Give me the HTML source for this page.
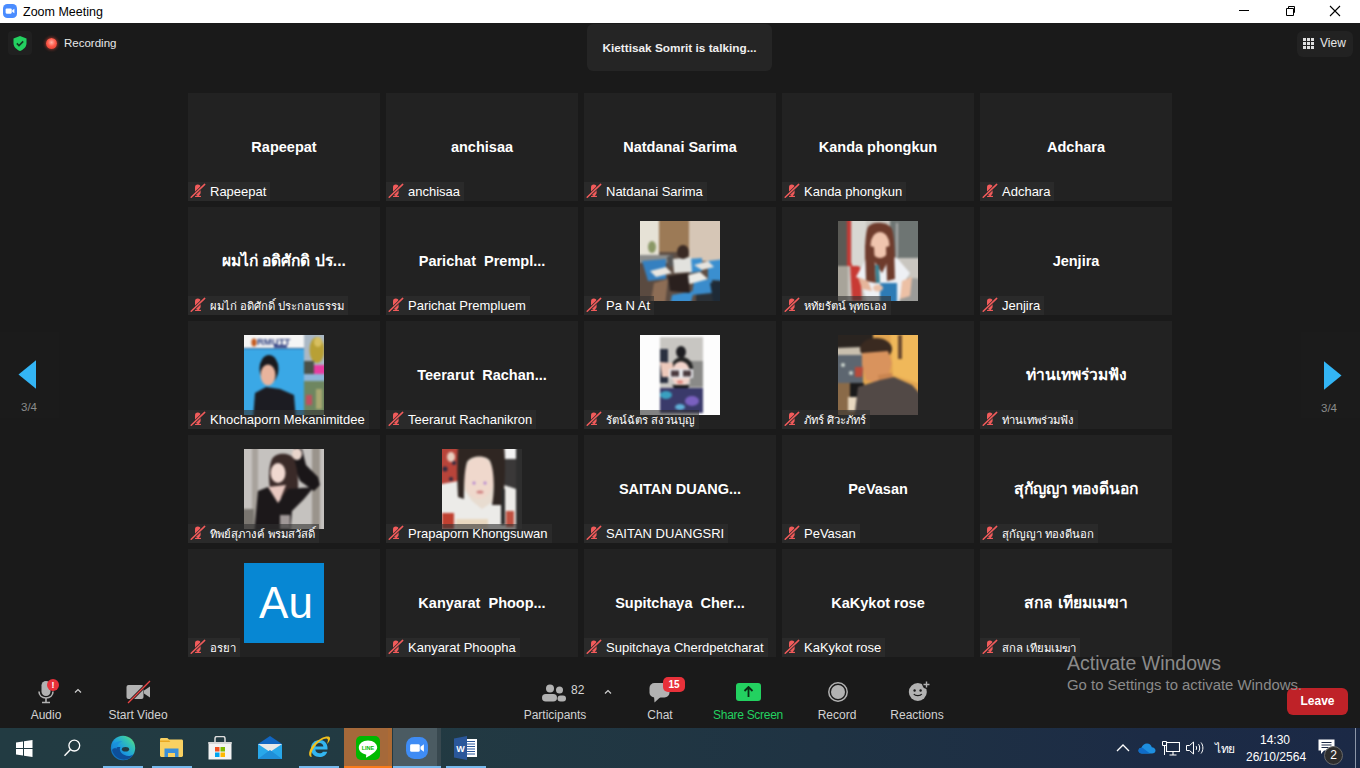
<!DOCTYPE html>
<html><head><meta charset="utf-8"><title>Zoom Meeting</title>
<style>
*{margin:0;padding:0;box-sizing:border-box}
html,body{width:1360px;height:768px;overflow:hidden}
body{background:#1a1a1a;font-family:"Liberation Sans",sans-serif;position:relative;color:#fff}
.abs{position:absolute}
#title{left:0;top:0;width:1360px;height:23px;background:#fff;color:#000}
#title .t{left:23px;top:5px;font-size:12.5px;white-space:nowrap}
.tile{position:absolute;width:192px;height:108px;background:#222;overflow:hidden}
.tile .ph{position:absolute;left:56px;top:14px;width:80px;height:80px;overflow:hidden}
.tile .big{position:absolute;left:0;top:45px;width:192px;text-align:center;font-weight:bold;font-size:14.5px;line-height:18px;white-space:nowrap;color:#fff}
.tile .lab{position:absolute;left:0;top:89px;height:19px;background:rgba(48,48,48,.6);padding:0 4px 0 22px;font-size:13px;line-height:20px;white-space:nowrap;color:#fff}
.tile .lab .mic{position:absolute;left:0;top:-1px}
.tile .lab .th{font-size:11.3px}
.tile .big .th{font-size:15.6px}
.tb{position:absolute;text-align:center;color:#d2d2d2;font-size:12px;white-space:nowrap}
</style></head>
<body>
<svg width="0" height="0" style="position:absolute"><filter id="bl" x="-10%" y="-10%" width="120%" height="120%"><feGaussianBlur stdDeviation="1.2"/></filter></svg>
<div id="title" class="abs">
  <svg class="abs" style="left:3px;top:4px" width="14" height="14" viewBox="0 0 16 16"><rect x="0" y="0" width="16" height="16" rx="5" fill="#4a8cff"/><rect x="3" y="5" width="7" height="6" rx="1.2" fill="#fff"/><path d="M10.5 7.2L13 5.5v5l-2.5-1.7z" fill="#fff"/></svg>
  <div class="abs t">Zoom Meeting</div>
  <div class="abs" style="left:1239px;top:10px;width:10px;height:1px;background:#000"></div>
  <svg class="abs" style="left:1284px;top:5px" width="12" height="12" viewBox="0 0 12 12"><path d="M2.5 3.5h7v7h-7z" fill="none" stroke="#000"/><path d="M4.5 3.5v-2h6v6h-1" fill="none" stroke="#000"/></svg>
  <svg class="abs" style="left:1329px;top:5px" width="12" height="12" viewBox="0 0 12 12"><path d="M1 1L11 11M11 1L1 11" stroke="#000" stroke-width="1.1"/></svg>
</div>

<!-- top bar -->
<div class="abs" style="left:8px;top:31px;width:24px;height:24px;background:#202020;border-radius:4px"></div>
<svg class="abs" style="left:13px;top:36px" width="14" height="15" viewBox="0 0 14 15"><path d="M7 0L13.5 2.5V7c0 4-3 6.5-6.5 8C3.5 13.5.5 11 .5 7V2.5z" fill="#23d160"/><path d="M3.8 7.4l2.2 2.2 4.2-4.2" fill="none" stroke="#143a22" stroke-width="1.6"/></svg>
<div class="abs" style="left:46px;top:38px;width:11px;height:11px;border-radius:50%;background:radial-gradient(circle at 50% 40%,#ffb3a6 0%,#ff5a4a 45%,#d8382a 100%);box-shadow:0 0 3px 1px rgba(255,80,60,.45)"></div>
<div class="abs" style="left:64px;top:37px;font-size:11.5px;color:#e8e8e8;white-space:nowrap">Recording</div>

<div class="abs" style="left:587px;top:24px;width:185px;height:47px;background:#252525;border-radius:6px"></div>
<div class="abs" style="left:587px;top:40.5px;width:185px;text-align:center;font-size:11.8px;font-weight:bold;color:#f0f0f0;white-space:nowrap">Kiettisak Somrit is talking...</div>

<div class="abs" style="left:1297px;top:31px;width:56px;height:26px;background:#222;border-radius:6px"></div>
<svg class="abs" style="left:1303px;top:38px" width="11" height="11" viewBox="0 0 11 11" fill="#e0e0e0"><rect x="0" y="0" width="3" height="3"/><rect x="4" y="0" width="3" height="3"/><rect x="8" y="0" width="3" height="3"/><rect x="0" y="4" width="3" height="3"/><rect x="4" y="4" width="3" height="3"/><rect x="8" y="4" width="3" height="3"/><rect x="0" y="8" width="3" height="3"/><rect x="4" y="8" width="3" height="3"/><rect x="8" y="8" width="3" height="3"/></svg>
<div class="abs" style="left:1320px;top:36px;font-size:12px;color:#e8e8e8;white-space:nowrap">View</div>

<!-- arrows -->
<div class="abs" style="left:0;top:332px;width:59px;height:86px;background:#1b1b1b"></div>
<div class="abs" style="left:1301px;top:332px;width:59px;height:86px;background:#1b1b1b"></div>
<svg class="abs" style="left:18px;top:360px" width="19" height="29" viewBox="0 0 19 29"><path d="M0.5 14.5L18 0.3V28.7z" fill="#33b5f5"/></svg>
<div class="abs" style="left:21px;top:401px;font-size:11.5px;color:#8c8c8c;white-space:nowrap">3/4</div>
<svg class="abs" style="left:1323px;top:361px" width="19" height="29" viewBox="0 0 19 29"><path d="M18.5 14.5L1 0.3V28.7z" fill="#33b5f5"/></svg>
<div class="abs" style="left:1321px;top:401.5px;font-size:11.5px;color:#8c8c8c;white-space:nowrap">3/4</div>

<div class="tile" style="left:188px;top:93px"><div class="big"><span>Rapeepat</span></div><div class="lab"><svg class="mic" width="20" height="20" viewBox="0 0 20 20"><rect x="7" y="3.6" width="5.6" height="10.8" rx="2.8" fill="#f25b5b"/><rect x="9.3" y="13.5" width="1.6" height="1.8" fill="#f25b5b"/><rect x="7" y="14.8" width="6" height="1.3" rx=".6" fill="#f25b5b"/><path d="M3.2 16.3L16.7 3.4" stroke="#2b2b2b" stroke-width="3"/><path d="M3.2 16.3L16.7 3.4" stroke="#f25b5b" stroke-width="1.5" stroke-linecap="round"/></svg><span>Rapeepat</span></div></div>
<div class="tile" style="left:386px;top:93px"><div class="big"><span>anchisaa</span></div><div class="lab"><svg class="mic" width="20" height="20" viewBox="0 0 20 20"><rect x="7" y="3.6" width="5.6" height="10.8" rx="2.8" fill="#f25b5b"/><rect x="9.3" y="13.5" width="1.6" height="1.8" fill="#f25b5b"/><rect x="7" y="14.8" width="6" height="1.3" rx=".6" fill="#f25b5b"/><path d="M3.2 16.3L16.7 3.4" stroke="#2b2b2b" stroke-width="3"/><path d="M3.2 16.3L16.7 3.4" stroke="#f25b5b" stroke-width="1.5" stroke-linecap="round"/></svg><span>anchisaa</span></div></div>
<div class="tile" style="left:584px;top:93px"><div class="big"><span>Natdanai Sarima</span></div><div class="lab"><svg class="mic" width="20" height="20" viewBox="0 0 20 20"><rect x="7" y="3.6" width="5.6" height="10.8" rx="2.8" fill="#f25b5b"/><rect x="9.3" y="13.5" width="1.6" height="1.8" fill="#f25b5b"/><rect x="7" y="14.8" width="6" height="1.3" rx=".6" fill="#f25b5b"/><path d="M3.2 16.3L16.7 3.4" stroke="#2b2b2b" stroke-width="3"/><path d="M3.2 16.3L16.7 3.4" stroke="#f25b5b" stroke-width="1.5" stroke-linecap="round"/></svg><span>Natdanai Sarima</span></div></div>
<div class="tile" style="left:782px;top:93px"><div class="big"><span>Kanda phongkun</span></div><div class="lab"><svg class="mic" width="20" height="20" viewBox="0 0 20 20"><rect x="7" y="3.6" width="5.6" height="10.8" rx="2.8" fill="#f25b5b"/><rect x="9.3" y="13.5" width="1.6" height="1.8" fill="#f25b5b"/><rect x="7" y="14.8" width="6" height="1.3" rx=".6" fill="#f25b5b"/><path d="M3.2 16.3L16.7 3.4" stroke="#2b2b2b" stroke-width="3"/><path d="M3.2 16.3L16.7 3.4" stroke="#f25b5b" stroke-width="1.5" stroke-linecap="round"/></svg><span>Kanda phongkun</span></div></div>
<div class="tile" style="left:980px;top:93px"><div class="big"><span>Adchara</span></div><div class="lab"><svg class="mic" width="20" height="20" viewBox="0 0 20 20"><rect x="7" y="3.6" width="5.6" height="10.8" rx="2.8" fill="#f25b5b"/><rect x="9.3" y="13.5" width="1.6" height="1.8" fill="#f25b5b"/><rect x="7" y="14.8" width="6" height="1.3" rx=".6" fill="#f25b5b"/><path d="M3.2 16.3L16.7 3.4" stroke="#2b2b2b" stroke-width="3"/><path d="M3.2 16.3L16.7 3.4" stroke="#f25b5b" stroke-width="1.5" stroke-linecap="round"/></svg><span>Adchara</span></div></div>
<div class="tile" style="left:188px;top:207px"><div class="big"><span class="th">ผมไก่ อดิศักดิ ปร...</span></div><div class="lab"><svg class="mic" width="20" height="20" viewBox="0 0 20 20"><rect x="7" y="3.6" width="5.6" height="10.8" rx="2.8" fill="#f25b5b"/><rect x="9.3" y="13.5" width="1.6" height="1.8" fill="#f25b5b"/><rect x="7" y="14.8" width="6" height="1.3" rx=".6" fill="#f25b5b"/><path d="M3.2 16.3L16.7 3.4" stroke="#2b2b2b" stroke-width="3"/><path d="M3.2 16.3L16.7 3.4" stroke="#f25b5b" stroke-width="1.5" stroke-linecap="round"/></svg><span class="th">ผมไก่ อดิศักดิ์ ประกอบธรรม</span></div></div>
<div class="tile" style="left:386px;top:207px"><div class="big"><span>Parichat&nbsp; Prempl...</span></div><div class="lab"><svg class="mic" width="20" height="20" viewBox="0 0 20 20"><rect x="7" y="3.6" width="5.6" height="10.8" rx="2.8" fill="#f25b5b"/><rect x="9.3" y="13.5" width="1.6" height="1.8" fill="#f25b5b"/><rect x="7" y="14.8" width="6" height="1.3" rx=".6" fill="#f25b5b"/><path d="M3.2 16.3L16.7 3.4" stroke="#2b2b2b" stroke-width="3"/><path d="M3.2 16.3L16.7 3.4" stroke="#f25b5b" stroke-width="1.5" stroke-linecap="round"/></svg><span>Parichat Prempluem</span></div></div>
<div class="tile" style="left:584px;top:207px"><div class="ph"><svg style="position:absolute;left:-4px;top:-4px;filter:blur(0.9px)" width="88" height="88" viewBox="-4 -4 88 88"><rect x="-5" y="-5" width="90" height="90" fill="#5e4e44"/>
<rect x="-5" y="-5" width="24" height="40" fill="#e6e2d6"/><ellipse cx="12" cy="26" rx="4" ry="6" fill="#8a9866"/>
<rect x="19" y="-5" width="31" height="36" fill="#9c7a56"/>
<rect x="49" y="-5" width="36" height="45" fill="#d6c6b6"/>
<rect x="-5" y="34" width="37" height="8" fill="#8b8d8c"/>
<path d="M-5 42H32L28 80H-5z" fill="#5a4a40"/>
<path d="M2 40L26 38 26 58 8 60z" fill="#3580c0"/>
<path d="M48 38L62 37 62 50 50 52z" fill="#3a8fd0"/>
<path d="M68 40L85 38 85 60 68 60z" fill="#3a8fd0"/>
<path d="M32 74L54 70 50 85 30 85z" fill="#3a8fd0"/>
<path d="M56 58L85 60 85 85 56 85z" fill="#2a3036"/><path d="M54 60L72 58 72 72 52 74z" fill="#3a8ccc"/><path d="M70 62L85 60 85 85 74 85z" fill="#1e2a36"/>
<path d="M10 50L26 46 32 52 16 56z" fill="#e9e6e0"/>
<path d="M41 56L60 51 68 58 50 63z" fill="#ecebe6"/>
<path d="M54 44L68 40 74 46 62 49z" fill="#e6e3de"/>
<path d="M14 62L28 58 25 85 10 85z" fill="#8d6d55"/>
<path d="M27 36L33 33 34 45 28 46z" fill="#555"/>
<path d="M33 38L51 36 52 51 34 52z" fill="#e2e2de"/>
<ellipse cx="43" cy="31" rx="6" ry="7" fill="#3a2a24"/>
<path d="M28 55L48 52 50 72 30 70z" fill="#2a201e"/></svg></div><div class="lab"><svg class="mic" width="20" height="20" viewBox="0 0 20 20"><rect x="7" y="3.6" width="5.6" height="10.8" rx="2.8" fill="#f25b5b"/><rect x="9.3" y="13.5" width="1.6" height="1.8" fill="#f25b5b"/><rect x="7" y="14.8" width="6" height="1.3" rx=".6" fill="#f25b5b"/><path d="M3.2 16.3L16.7 3.4" stroke="#2b2b2b" stroke-width="3"/><path d="M3.2 16.3L16.7 3.4" stroke="#f25b5b" stroke-width="1.5" stroke-linecap="round"/></svg><span>Pa N At</span></div></div>
<div class="tile" style="left:782px;top:207px"><div class="ph"><svg style="position:absolute;left:-4px;top:-4px;filter:blur(0.9px)" width="88" height="88" viewBox="-4 -4 88 88"><rect x="-5" y="-5" width="90" height="90" fill="#c9c6c0"/>
<rect x="-5" y="-5" width="15" height="90" fill="#5a5a55"/><rect x="-5" y="45" width="15" height="40" fill="#a8a49a"/>
<rect x="9" y="-5" width="4" height="50" fill="#c43a35"/><path d="M12 42L22 46 24 80 14 80z" fill="#c83a34"/>
<rect x="14" y="-5" width="14" height="50" fill="#d8d7d2"/>
<rect x="52" y="-5" width="33" height="42" fill="#6e7573"/><rect x="58" y="2" width="2" height="34" fill="#aaa"/>
<path d="M56 56L85 58 85 85 56 85z" fill="#9b9b98"/>
<path d="M30 6C34 0 50 0 54 8 58 20 56 45 58 62L28 62C27 40 26 15 30 6z" fill="#6e3b2c"/>
<ellipse cx="42" cy="24" rx="9.5" ry="13" fill="#f0c4ae"/>
<path d="M18 56L28 38 36 40 44 52 50 40 58 36 72 52 66 62 60 85 30 85 22 58z" fill="#eef0f4"/>
<path d="M27 24L36 26 38 62 28 60z" fill="#6e3b2c"/><path d="M48 26L56 24 57 58 49 60z" fill="#6e3b2c"/>
<path d="M20 56L30 60 34 70 24 68z" fill="#e5b59b"/>
<path d="M64 60L74 56 72 75 62 78z" fill="#ecc0a5"/>
<path d="M37 44L41 44 42 62 38 62z" fill="#3a8090"/>
<rect x="42" y="62" width="17" height="20" fill="#2d7bb5"/>
<ellipse cx="40" cy="67" rx="5" ry="3.5" fill="#eac0a8"/></svg></div><div class="lab"><svg class="mic" width="20" height="20" viewBox="0 0 20 20"><rect x="7" y="3.6" width="5.6" height="10.8" rx="2.8" fill="#f25b5b"/><rect x="9.3" y="13.5" width="1.6" height="1.8" fill="#f25b5b"/><rect x="7" y="14.8" width="6" height="1.3" rx=".6" fill="#f25b5b"/><path d="M3.2 16.3L16.7 3.4" stroke="#2b2b2b" stroke-width="3"/><path d="M3.2 16.3L16.7 3.4" stroke="#f25b5b" stroke-width="1.5" stroke-linecap="round"/></svg><span class="th">หทัยรัตน์ พุทธเอง</span></div></div>
<div class="tile" style="left:980px;top:207px"><div class="big"><span>Jenjira</span></div><div class="lab"><svg class="mic" width="20" height="20" viewBox="0 0 20 20"><rect x="7" y="3.6" width="5.6" height="10.8" rx="2.8" fill="#f25b5b"/><rect x="9.3" y="13.5" width="1.6" height="1.8" fill="#f25b5b"/><rect x="7" y="14.8" width="6" height="1.3" rx=".6" fill="#f25b5b"/><path d="M3.2 16.3L16.7 3.4" stroke="#2b2b2b" stroke-width="3"/><path d="M3.2 16.3L16.7 3.4" stroke="#f25b5b" stroke-width="1.5" stroke-linecap="round"/></svg><span>Jenjira</span></div></div>
<div class="tile" style="left:188px;top:321px"><div class="ph"><svg style="position:absolute;left:-4px;top:-4px;filter:blur(0.9px)" width="88" height="88" viewBox="-4 -4 88 88"><rect x="-5" y="-5" width="90" height="90" fill="#3aa8e6"/>
<rect x="-5" y="-5" width="65" height="18" fill="#f5f5f5"/><rect x="-5" y="13" width="65" height="1" fill="#2a5a90"/>
<ellipse cx="10" cy="7.5" rx="2.6" ry="4" fill="#c35a20"/><text x="13" y="10" font-family="Liberation Sans" font-size="9.5" font-weight="bold" fill="#2c3e7e">RMUTT</text><rect x="30" y="10" width="13" height="2.5" fill="#2a3a80"/>
<rect x="60" y="-5" width="25" height="44" fill="#aab8c5"/>
<ellipse cx="73" cy="15" rx="7.5" ry="13" fill="#b8a035"/><ellipse cx="74" cy="7" rx="4" ry="5" fill="#d8c060"/><rect x="60" y="26" width="10" height="13" fill="#4a5048"/><rect x="70" y="30" width="15" height="9" fill="#e83ca0"/>
<rect x="60" y="39" width="25" height="7" fill="#8fb5d8"/><rect x="60" y="46" width="25" height="40" fill="#6e8660"/>
<rect x="62" y="60" width="6" height="10" fill="#c05060"/><rect x="72" y="54" width="6" height="20" fill="#a8a870"/>
<ellipse cx="25" cy="34" rx="9.5" ry="14" fill="#1a1a1e"/>
<ellipse cx="24" cy="40" rx="7.5" ry="10.5" fill="#e8b49d"/>
<path d="M9 85L11 58 22 52 36 54 50 60 52 85z" fill="#1c1c22"/></svg></div><div class="lab"><svg class="mic" width="20" height="20" viewBox="0 0 20 20"><rect x="7" y="3.6" width="5.6" height="10.8" rx="2.8" fill="#f25b5b"/><rect x="9.3" y="13.5" width="1.6" height="1.8" fill="#f25b5b"/><rect x="7" y="14.8" width="6" height="1.3" rx=".6" fill="#f25b5b"/><path d="M3.2 16.3L16.7 3.4" stroke="#2b2b2b" stroke-width="3"/><path d="M3.2 16.3L16.7 3.4" stroke="#f25b5b" stroke-width="1.5" stroke-linecap="round"/></svg><span>Khochaporn Mekanimitdee</span></div></div>
<div class="tile" style="left:386px;top:321px"><div class="big"><span>Teerarut&nbsp; Rachan...</span></div><div class="lab"><svg class="mic" width="20" height="20" viewBox="0 0 20 20"><rect x="7" y="3.6" width="5.6" height="10.8" rx="2.8" fill="#f25b5b"/><rect x="9.3" y="13.5" width="1.6" height="1.8" fill="#f25b5b"/><rect x="7" y="14.8" width="6" height="1.3" rx=".6" fill="#f25b5b"/><path d="M3.2 16.3L16.7 3.4" stroke="#2b2b2b" stroke-width="3"/><path d="M3.2 16.3L16.7 3.4" stroke="#f25b5b" stroke-width="1.5" stroke-linecap="round"/></svg><span>Teerarut Rachanikron</span></div></div>
<div class="tile" style="left:584px;top:321px"><div class="ph"><svg style="position:absolute;left:-4px;top:-4px;filter:blur(0.9px)" width="88" height="88" viewBox="-4 -4 88 88"><rect x="-5" y="-5" width="90" height="90" fill="#fdfdfd"/>
<rect x="20" y="2" width="43" height="76" fill="#c8c6c2"/>
<rect x="50" y="26" width="13" height="26" fill="#8a8a88"/>
<rect x="20" y="14" width="8" height="34" fill="#2a3040"/>
<ellipse cx="41" cy="17" rx="5" ry="6" fill="#1e1e22"/>
<ellipse cx="42" cy="34" rx="11" ry="12" fill="#222"/>
<ellipse cx="41" cy="39" rx="9.5" ry="12.5" fill="#f2d4cb"/>
<path d="M20 27L33 28 33 42 22 42z" fill="#edc9bb"/>
<rect x="29" y="34" width="24" height="9" fill="#e8e8ec"/>
<rect x="31" y="35.5" width="8" height="6" fill="#4a3a3e"/><rect x="43" y="35.5" width="8" height="6" fill="#4a3a3e"/>
<ellipse cx="40" cy="47" rx="3" ry="1.5" fill="#d87a70"/>
<path d="M32 50L50 50 46 56 36 56z" fill="#1a1a1a"/>
<rect x="20" y="53" width="43" height="25" fill="#3a3a6a"/>
<ellipse cx="26" cy="60" rx="6" ry="4" fill="#3aa0c0"/><ellipse cx="52" cy="66" rx="7" ry="5" fill="#7a60c0"/><ellipse cx="40" cy="72" rx="5" ry="3" fill="#60b0d8"/></svg></div><div class="lab"><svg class="mic" width="20" height="20" viewBox="0 0 20 20"><rect x="7" y="3.6" width="5.6" height="10.8" rx="2.8" fill="#f25b5b"/><rect x="9.3" y="13.5" width="1.6" height="1.8" fill="#f25b5b"/><rect x="7" y="14.8" width="6" height="1.3" rx=".6" fill="#f25b5b"/><path d="M3.2 16.3L16.7 3.4" stroke="#2b2b2b" stroke-width="3"/><path d="M3.2 16.3L16.7 3.4" stroke="#f25b5b" stroke-width="1.5" stroke-linecap="round"/></svg><span class="th">รัตน์ฉัตร สงวนบุญ</span></div></div>
<div class="tile" style="left:782px;top:321px"><div class="ph"><svg style="position:absolute;left:-4px;top:-4px;filter:blur(0.9px)" width="88" height="88" viewBox="-4 -4 88 88"><rect x="-5" y="-5" width="90" height="90" fill="#e2a550"/>
<rect x="-5" y="-5" width="40" height="18" fill="#2a2420"/>
<path d="M-5 13L24 12 24 20 -5 20z" fill="#c9bfae"/>
<rect x="-5" y="20" width="30" height="30" fill="#5d6670"/>
<circle cx="5" cy="30" r="2" fill="#cfd8d0"/><circle cx="13" cy="38" r="2" fill="#cfd8d0"/>
<rect x="-5" y="48" width="25" height="37" fill="#8a6a48"/>
<path d="M52 -5L85 -5 85 50 55 40z" fill="#f0b85a"/>
<path d="M60 0L64 0 64 24 60 24z" fill="#6a4a30"/>
<path d="M17 32L25 32 24 42 17 42z" fill="#b84a3a"/>
<path d="M12 48L26 48 26 62 12 62z" fill="#1a1a1a"/>
<path d="M10 62L20 62 20 76 10 76z" fill="#e8d8c0"/>
<ellipse cx="38" cy="14" rx="16" ry="11" fill="#3a2a20"/>
<path d="M24 18L50 16 54 28 50 42 40 48 28 45 24 30z" fill="#d9935d"/>
<path d="M40 40L54 38 56 55 42 56z" fill="#c98550"/>
<path d="M16 85L20 52 42 45 56 42 74 50 85 62 85 85z" fill="#524946"/></svg></div><div class="lab"><svg class="mic" width="20" height="20" viewBox="0 0 20 20"><rect x="7" y="3.6" width="5.6" height="10.8" rx="2.8" fill="#f25b5b"/><rect x="9.3" y="13.5" width="1.6" height="1.8" fill="#f25b5b"/><rect x="7" y="14.8" width="6" height="1.3" rx=".6" fill="#f25b5b"/><path d="M3.2 16.3L16.7 3.4" stroke="#2b2b2b" stroke-width="3"/><path d="M3.2 16.3L16.7 3.4" stroke="#f25b5b" stroke-width="1.5" stroke-linecap="round"/></svg><span class="th">ภัทร์ ศิวะภัทร์</span></div></div>
<div class="tile" style="left:980px;top:321px"><div class="big"><span class="th">ท่านเทพร่วมฟัง</span></div><div class="lab"><svg class="mic" width="20" height="20" viewBox="0 0 20 20"><rect x="7" y="3.6" width="5.6" height="10.8" rx="2.8" fill="#f25b5b"/><rect x="9.3" y="13.5" width="1.6" height="1.8" fill="#f25b5b"/><rect x="7" y="14.8" width="6" height="1.3" rx=".6" fill="#f25b5b"/><path d="M3.2 16.3L16.7 3.4" stroke="#2b2b2b" stroke-width="3"/><path d="M3.2 16.3L16.7 3.4" stroke="#f25b5b" stroke-width="1.5" stroke-linecap="round"/></svg><span class="th">ท่านเทพร่วมฟัง</span></div></div>
<div class="tile" style="left:188px;top:435px"><div class="ph"><svg style="position:absolute;left:-4px;top:-4px;filter:blur(0.9px)" width="88" height="88" viewBox="-4 -4 88 88"><rect x="-5" y="-5" width="90" height="90" fill="#c5c2bf"/>
<rect x="8" y="-5" width="6" height="90" fill="#a8a29c"/><rect x="68" y="-5" width="8" height="90" fill="#9a948c"/>
<path d="M-5 60L10 60 10 85 -5 85z" fill="#7a7670"/>
<path d="M50 -5L58 0 62 16 74 28 76 36 70 42 56 32 50 18z" fill="#1a1618"/>
<ellipse cx="53" cy="5" rx="5" ry="6" fill="#e9d5cc"/>
<path d="M28 10C32 3 46 3 50 10 54 20 56 40 52 52L28 48C24 36 24 18 28 10z" fill="#3a2a28"/>
<ellipse cx="34" cy="24" rx="7.5" ry="10" fill="#f0d8d0"/>
<path d="M24 38L42 36 34 56z" fill="#e8c8c0"/>
<path d="M10 85L14 42 24 38 34 54 44 40 70 38 60 50 48 62 46 85z" fill="#1c181a"/>
<rect x="36" y="66" width="10" height="14" fill="#a09898"/></svg></div><div class="lab"><svg class="mic" width="20" height="20" viewBox="0 0 20 20"><rect x="7" y="3.6" width="5.6" height="10.8" rx="2.8" fill="#f25b5b"/><rect x="9.3" y="13.5" width="1.6" height="1.8" fill="#f25b5b"/><rect x="7" y="14.8" width="6" height="1.3" rx=".6" fill="#f25b5b"/><path d="M3.2 16.3L16.7 3.4" stroke="#2b2b2b" stroke-width="3"/><path d="M3.2 16.3L16.7 3.4" stroke="#f25b5b" stroke-width="1.5" stroke-linecap="round"/></svg><span class="th">ทิพย์สุภางค์ พรมสวัสดิ์</span></div></div>
<div class="tile" style="left:386px;top:435px"><div class="ph"><svg style="position:absolute;left:-4px;top:-4px;filter:blur(0.9px)" width="88" height="88" viewBox="-4 -4 88 88"><rect x="-5" y="-5" width="90" height="90" fill="#e8dcd0"/>
<rect x="-5" y="-5" width="23" height="43" fill="#b8443a"/>
<circle cx="3" cy="20" r="2.5" fill="#2a2a40"/><circle cx="9" cy="30" r="2" fill="#2a2a40"/><circle cx="12" cy="14" r="2" fill="#2a2a40"/>
<ellipse cx="9" cy="8" rx="4" ry="5" fill="#e8cfc0"/>
<rect x="56" y="-5" width="20" height="15" fill="#f2f2f2"/>
<rect x="60" y="10" width="25" height="38" fill="#3a3838"/><rect x="74" y="-5" width="11" height="90" fill="#2e2e2e"/>
<path d="M-5 36L16 32 30 52 40 60 52 52 62 36 74 40 74 85 -5 85z" fill="#ecebe8"/>
<ellipse cx="37" cy="29" rx="15" ry="21" fill="#efd8cc"/>
<path d="M16 -5H62C64 15 63 40 60 56L50 56C53 40 52 20 48 12 44 6 30 6 25 13 22 22 22 40 22 50L16 48C15 30 15 12 16 -5z" fill="#2f2622"/>
<rect x="59" y="40" width="4" height="36" fill="#2a2a2a"/>
<rect x="0" y="64" width="12" height="16" fill="#c04030"/><rect x="64" y="62" width="8" height="16" fill="#c05040"/>
<rect x="14" y="70" width="32" height="10" fill="#e9d8c0"/>
<ellipse cx="38" cy="43" rx="3.5" ry="1.6" fill="#d08080"/>
<circle cx="32" cy="34" r="1.5" fill="#b080d0"/><circle cx="43" cy="34" r="1.5" fill="#b080d0"/></svg></div><div class="lab"><svg class="mic" width="20" height="20" viewBox="0 0 20 20"><rect x="7" y="3.6" width="5.6" height="10.8" rx="2.8" fill="#f25b5b"/><rect x="9.3" y="13.5" width="1.6" height="1.8" fill="#f25b5b"/><rect x="7" y="14.8" width="6" height="1.3" rx=".6" fill="#f25b5b"/><path d="M3.2 16.3L16.7 3.4" stroke="#2b2b2b" stroke-width="3"/><path d="M3.2 16.3L16.7 3.4" stroke="#f25b5b" stroke-width="1.5" stroke-linecap="round"/></svg><span>Prapaporn Khongsuwan</span></div></div>
<div class="tile" style="left:584px;top:435px"><div class="big"><span>SAITAN DUANG...</span></div><div class="lab"><svg class="mic" width="20" height="20" viewBox="0 0 20 20"><rect x="7" y="3.6" width="5.6" height="10.8" rx="2.8" fill="#f25b5b"/><rect x="9.3" y="13.5" width="1.6" height="1.8" fill="#f25b5b"/><rect x="7" y="14.8" width="6" height="1.3" rx=".6" fill="#f25b5b"/><path d="M3.2 16.3L16.7 3.4" stroke="#2b2b2b" stroke-width="3"/><path d="M3.2 16.3L16.7 3.4" stroke="#f25b5b" stroke-width="1.5" stroke-linecap="round"/></svg><span>SAITAN DUANGSRI</span></div></div>
<div class="tile" style="left:782px;top:435px"><div class="big"><span>PeVasan</span></div><div class="lab"><svg class="mic" width="20" height="20" viewBox="0 0 20 20"><rect x="7" y="3.6" width="5.6" height="10.8" rx="2.8" fill="#f25b5b"/><rect x="9.3" y="13.5" width="1.6" height="1.8" fill="#f25b5b"/><rect x="7" y="14.8" width="6" height="1.3" rx=".6" fill="#f25b5b"/><path d="M3.2 16.3L16.7 3.4" stroke="#2b2b2b" stroke-width="3"/><path d="M3.2 16.3L16.7 3.4" stroke="#f25b5b" stroke-width="1.5" stroke-linecap="round"/></svg><span>PeVasan</span></div></div>
<div class="tile" style="left:980px;top:435px"><div class="big"><span class="th">สุกัญญา ทองดีนอก</span></div><div class="lab"><svg class="mic" width="20" height="20" viewBox="0 0 20 20"><rect x="7" y="3.6" width="5.6" height="10.8" rx="2.8" fill="#f25b5b"/><rect x="9.3" y="13.5" width="1.6" height="1.8" fill="#f25b5b"/><rect x="7" y="14.8" width="6" height="1.3" rx=".6" fill="#f25b5b"/><path d="M3.2 16.3L16.7 3.4" stroke="#2b2b2b" stroke-width="3"/><path d="M3.2 16.3L16.7 3.4" stroke="#f25b5b" stroke-width="1.5" stroke-linecap="round"/></svg><span class="th">สุกัญญา ทองดีนอก</span></div></div>
<div class="tile" style="left:188px;top:549px"><div class="ph" style="background:#0787d3;color:#fff;font-size:44px;line-height:79px;text-align:center;padding-left:4px;font-family:'Liberation Sans',sans-serif">Au</div><div class="lab"><svg class="mic" width="20" height="20" viewBox="0 0 20 20"><rect x="7" y="3.6" width="5.6" height="10.8" rx="2.8" fill="#f25b5b"/><rect x="9.3" y="13.5" width="1.6" height="1.8" fill="#f25b5b"/><rect x="7" y="14.8" width="6" height="1.3" rx=".6" fill="#f25b5b"/><path d="M3.2 16.3L16.7 3.4" stroke="#2b2b2b" stroke-width="3"/><path d="M3.2 16.3L16.7 3.4" stroke="#f25b5b" stroke-width="1.5" stroke-linecap="round"/></svg><span class="th">อรยา</span></div></div>
<div class="tile" style="left:386px;top:549px"><div class="big"><span>Kanyarat&nbsp; Phoop...</span></div><div class="lab"><svg class="mic" width="20" height="20" viewBox="0 0 20 20"><rect x="7" y="3.6" width="5.6" height="10.8" rx="2.8" fill="#f25b5b"/><rect x="9.3" y="13.5" width="1.6" height="1.8" fill="#f25b5b"/><rect x="7" y="14.8" width="6" height="1.3" rx=".6" fill="#f25b5b"/><path d="M3.2 16.3L16.7 3.4" stroke="#2b2b2b" stroke-width="3"/><path d="M3.2 16.3L16.7 3.4" stroke="#f25b5b" stroke-width="1.5" stroke-linecap="round"/></svg><span>Kanyarat Phoopha</span></div></div>
<div class="tile" style="left:584px;top:549px"><div class="big"><span>Supitchaya&nbsp; Cher...</span></div><div class="lab"><svg class="mic" width="20" height="20" viewBox="0 0 20 20"><rect x="7" y="3.6" width="5.6" height="10.8" rx="2.8" fill="#f25b5b"/><rect x="9.3" y="13.5" width="1.6" height="1.8" fill="#f25b5b"/><rect x="7" y="14.8" width="6" height="1.3" rx=".6" fill="#f25b5b"/><path d="M3.2 16.3L16.7 3.4" stroke="#2b2b2b" stroke-width="3"/><path d="M3.2 16.3L16.7 3.4" stroke="#f25b5b" stroke-width="1.5" stroke-linecap="round"/></svg><span>Supitchaya Cherdpetcharat</span></div></div>
<div class="tile" style="left:782px;top:549px"><div class="big"><span>KaKykot rose</span></div><div class="lab"><svg class="mic" width="20" height="20" viewBox="0 0 20 20"><rect x="7" y="3.6" width="5.6" height="10.8" rx="2.8" fill="#f25b5b"/><rect x="9.3" y="13.5" width="1.6" height="1.8" fill="#f25b5b"/><rect x="7" y="14.8" width="6" height="1.3" rx=".6" fill="#f25b5b"/><path d="M3.2 16.3L16.7 3.4" stroke="#2b2b2b" stroke-width="3"/><path d="M3.2 16.3L16.7 3.4" stroke="#f25b5b" stroke-width="1.5" stroke-linecap="round"/></svg><span>KaKykot rose</span></div></div>
<div class="tile" style="left:980px;top:549px"><div class="big"><span class="th">สกล เทียมเมฆา</span></div><div class="lab"><svg class="mic" width="20" height="20" viewBox="0 0 20 20"><rect x="7" y="3.6" width="5.6" height="10.8" rx="2.8" fill="#f25b5b"/><rect x="9.3" y="13.5" width="1.6" height="1.8" fill="#f25b5b"/><rect x="7" y="14.8" width="6" height="1.3" rx=".6" fill="#f25b5b"/><path d="M3.2 16.3L16.7 3.4" stroke="#2b2b2b" stroke-width="3"/><path d="M3.2 16.3L16.7 3.4" stroke="#f25b5b" stroke-width="1.5" stroke-linecap="round"/></svg><span class="th">สกล เทียมเมฆา</span></div></div>

<!-- bottom toolbar -->
<svg class="abs" style="left:37px;top:680px" width="18" height="24" viewBox="0 0 18 24"><rect x="4.5" y="1" width="9" height="15" rx="4.5" fill="#b2b2b2"/><path d="M2 11.5c0 4 3 6.5 7 6.5s7-2.5 7-6.5" fill="none" stroke="#b2b2b2" stroke-width="1.6"/><path d="M9 18v4M5 22.5h8" stroke="#b2b2b2" stroke-width="1.6"/></svg>
<div class="abs" style="left:47px;top:679px;width:12px;height:12px;border-radius:50%;background:#e8313a;color:#fff;font-size:9px;font-weight:bold;line-height:12px;text-align:center">!</div>
<svg class="abs" style="left:74px;top:688px" width="8" height="5" viewBox="0 0 8 5"><path d="M1 4.5L4 1.5 7 4.5" fill="none" stroke="#d0d0d0" stroke-width="1.2"/></svg>
<div class="tb" style="left:16px;top:708px;width:60px">Audio</div>

<svg class="abs" style="left:126px;top:680px" width="26" height="24" viewBox="0 0 26 24"><rect x="0.5" y="5" width="17" height="14" rx="2" fill="#b2b2b2"/><path d="M18 10.5L24 6.5v11L18 13.5z" fill="#b2b2b2"/><path d="M2 23L24 1" stroke="#1a1a1a" stroke-width="3"/><path d="M2 23L24 1" stroke="#ee4444" stroke-width="1.3"/></svg>
<div class="tb" style="left:98px;top:708px;width:80px">Start Video</div>

<svg class="abs" style="left:542px;top:684px" width="26" height="18" viewBox="0 0 26 18"><circle cx="8" cy="4.5" r="4" fill="#b2b2b2"/><rect x="0" y="10" width="15" height="7.5" rx="3.75" fill="#b2b2b2"/><circle cx="17.5" cy="6" r="3.5" fill="#b2b2b2"/><rect x="15.5" y="11.5" width="8.5" height="6" rx="3" fill="#b2b2b2"/></svg>
<div class="abs" style="left:571px;top:683px;font-size:12px;color:#d6d6d6">82</div>
<svg class="abs" style="left:604px;top:689px" width="8" height="5" viewBox="0 0 8 5"><path d="M1 4.5L4 1.5 7 4.5" fill="none" stroke="#d0d0d0" stroke-width="1.2"/></svg>
<div class="tb" style="left:515px;top:708px;width:80px">Participants</div>

<svg class="abs" style="left:649px;top:683px" width="22" height="22" viewBox="0 0 22 22"><rect x="0.5" y="0" width="20" height="14.5" rx="5" fill="#b2b2b2"/><path d="M5 13l.5 6.5 6-5.5z" fill="#b2b2b2"/></svg>
<div class="abs" style="left:663px;top:677px;width:22px;height:15px;border-radius:5px;background:#e8313a;color:#fff;font-size:10px;font-weight:bold;line-height:15px;text-align:center">15</div>
<div class="tb" style="left:630px;top:708px;width:60px">Chat</div>

<div class="abs" style="left:736px;top:683px;width:25px;height:18px;border-radius:3px;background:#23d160"></div>
<svg class="abs" style="left:743px;top:686px" width="11" height="12" viewBox="0 0 11 12"><path d="M5.5 1v10M1.5 5l4-4 4 4" fill="none" stroke="#0b2a14" stroke-width="1.8"/></svg>
<div class="tb" style="left:703px;top:708px;width:90px;color:#23d160;letter-spacing:-.3px">Share Screen</div>

<svg class="abs" style="left:828px;top:682px" width="20" height="20" viewBox="0 0 20 20"><circle cx="10" cy="10" r="9.2" fill="none" stroke="#b2b2b2" stroke-width="1.5"/><circle cx="10" cy="10" r="7" fill="#b2b2b2"/></svg>
<div class="tb" style="left:807px;top:708px;width:60px">Record</div>

<svg class="abs" style="left:906px;top:680px" width="26" height="24" viewBox="0 0 26 24"><circle cx="11.8" cy="12" r="9" fill="#b2b2b2"/><circle cx="8.6" cy="10.5" r="1.2" fill="#1a1a1a"/><circle cx="14.6" cy="10.5" r="1.2" fill="#1a1a1a"/><path d="M7.8 14c1.5 2.2 6.5 2.2 8 0" fill="none" stroke="#1a1a1a" stroke-width="1.3"/><circle cx="20.5" cy="4.5" r="4.2" fill="#1a1a1a"/><path d="M20.5 1.5v6M17.5 4.5h6" stroke="#b2b2b2" stroke-width="1.4"/></svg>
<div class="tb" style="left:877px;top:708px;width:80px">Reactions</div>

<div class="abs" style="left:1287px;top:688px;width:61px;height:27px;border-radius:6px;background:#bf2228;color:#fff;font-weight:bold;font-size:12px;line-height:27px;text-align:center">Leave</div>

<div class="abs" style="left:1067px;top:652px;font-size:19.5px;color:#8a8a8a;white-space:nowrap">Activate Windows</div>
<div class="abs" style="left:1067px;top:676.5px;font-size:14.9px;color:#8a8a8a;white-space:nowrap">Go to Settings to activate Windows.</div>

<!-- taskbar -->
<div class="abs" style="left:0;top:728px;width:1360px;height:40px;background:linear-gradient(90deg,#223b42 0%,#223a42 30%,#1f3343 60%,#1c2b45 85%,#1b2946 100%)"></div>
<svg class="abs" style="left:16px;top:740px" width="17" height="17" viewBox="0 0 17 17" fill="#fff"><path d="M0 2.4L7 1.4V8H0z"/><path d="M8 1.2L16.5 0V8H8z"/><path d="M0 9H7v6.6L0 14.6z"/><path d="M8 9h8.5v8L8 15.8z"/></svg>
<svg class="abs" style="left:62px;top:738px" width="20" height="20" viewBox="0 0 20 20"><circle cx="12.3" cy="7.6" r="5.4" fill="none" stroke="#fff" stroke-width="1.3"/><path d="M8.5 11.5L2.5 17.8" stroke="#fff" stroke-width="1.4"/></svg>
<!-- edge -->
<svg class="abs" style="left:110px;top:735px" width="26" height="26" viewBox="0 0 26 26"><defs><linearGradient id="eg1" x1="0" y1="1" x2="1" y2="0"><stop offset="0" stop-color="#0b5cad"/><stop offset=".45" stop-color="#1c9be0"/><stop offset=".75" stop-color="#35c6b0"/><stop offset="1" stop-color="#7fe05e"/></linearGradient></defs><circle cx="13" cy="13" r="12.2" fill="url(#eg1)"/><path d="M2 15c1.5 6 7 10 12.5 9.8 4-.2 7.5-2.500 9-5.500-2.500 2-6 2.300-9 .8C10 18 9 14 10.500 12 7 11.500 3.500 12.500 2 15z" fill="#0d4f9a"/><path d="M2 13.500C3 8 8 5.500 12.500 6.500 8.500 7.500 6.500 10.500 7 13.500 5 13 3 13.200 2 13.500z" fill="#1a8fdc" opacity=".8"/><ellipse cx="15.5" cy="14.2" rx="3.6" ry="2.3" fill="#223b42"/></svg>
<div class="abs" style="left:103px;top:766px;width:40px;height:2px;background:#76b9ed"></div>
<!-- folder -->
<svg class="abs" style="left:160px;top:738px" width="23" height="19" viewBox="0 0 23 19"><path d="M0 1.5C0 .7.6 0 1.4 0h6l1.6 1.6h12.6c.8 0 1.4.6 1.4 1.4V17.6c0 .8-.6 1.4-1.4 1.4H1.4C.6 19 0 18.4 0 17.6z" fill="#f9d162"/><path d="M0 2.6h9l1.4 1.4H0z" fill="#e9a821"/><path d="M4.5 10.5h14v8.5h-3.5v-4h-7v4H4.5z" fill="#3a8fd9"/></svg>
<div class="abs" style="left:152px;top:766px;width:40px;height:2px;background:#76b9ed"></div>
<!-- store -->
<svg class="abs" style="left:208px;top:736px" width="24" height="24" viewBox="0 0 24 24"><path d="M7 6V2.5C7 1.4 7.9.5 9 .5h6c1.1 0 2 .9 2 2V6" fill="none" stroke="#ddd" stroke-width="1.5"/><path d="M0.5 6h23v17.5H.5z" fill="#f3f3f3"/><path d="M.5 6h23v2H.5z" fill="#d8d8d8"/><rect x="7" y="11" width="4.5" height="4.5" fill="#f25022"/><rect x="12.5" y="11" width="4.5" height="4.5" fill="#7fba00"/><rect x="7" y="16.5" width="4.5" height="4.5" fill="#00a4ef"/><rect x="12.5" y="16.5" width="4.5" height="4.5" fill="#ffb900"/></svg>
<!-- mail -->
<svg class="abs" style="left:258px;top:736px" width="24" height="23" viewBox="0 0 24 23"><path d="M0 8L12 0l12 8v15H0z" fill="#1166c2"/><path d="M0 8h24v15H0z" fill="#28a8ea"/><path d="M0 8h24l-12 8z" fill="#e8e8e8"/><path d="M0 23L12 14l12 9z" fill="#1f8fd8"/></svg>
<!-- IE -->
<svg class="abs" style="left:307px;top:735px" width="24" height="24" viewBox="0 0 24 24"><path d="M4 13.5C4 8.5 7.5 5 12.5 5S20.5 8.5 20.5 13v1.5H8.3c.3 2.5 2 3.8 4.3 3.8 1.6 0 2.7-.6 3.3-1.6h4.3c-1 3.3-4 5.3-7.6 5.3C7.7 22 4 18.5 4 13.5zM8.4 11.5h8c-.2-2.2-1.8-3.5-4-3.5s-3.7 1.3-4 3.5z" fill="#33b6f0"/><path d="M3 21.5C0 18 5 8 14 3.5 19 1 22.5 1 23 3c.5 1.5-1 4-3 6 1-3 1.5-4.8 0-5.3-2.5-.8-8 2.5-12 7.5-3.5 4.5-4.5 9-3 10.5-1 .3-1.6.2-2-.2z" fill="#f2c01d"/></svg>
<div class="abs" style="left:299px;top:766px;width:40px;height:2px;background:#76b9ed"></div>
<!-- LINE (active) -->
<div class="abs" style="left:344px;top:728px;width:44px;height:40px;background:#a5693a"></div>
<div class="abs" style="left:388px;top:728px;width:4px;height:40px;background:#ad6a34"></div>
<div class="abs" style="left:344px;top:766px;width:48px;height:2px;background:#f97b1b"></div>
<div class="abs" style="left:356px;top:736px;width:24px;height:24px;border-radius:5px;background:#00b900"></div>
<svg class="abs" style="left:358px;top:740px" width="20" height="18" viewBox="0 0 20 18"><path d="M10 .5C4.8.5 .8 3.7.8 7.6c0 3.4 3 6.2 7 6.9.5.1.5.5.4 1l-.2 1.5c0 .4.3.6.7.4 3-1.6 10.5-5.8 10.5-9.8C19.2 3.700 15.200 .5 10 .5z" fill="#fff"/><text x="10" y="9.6" font-family="Liberation Sans" font-size="5.5" font-weight="bold" text-anchor="middle" fill="#00b900">LINE</text></svg>
<!-- zoom (hover) -->
<div class="abs" style="left:393px;top:728px;width:44px;height:40px;background:#4b5b62"></div>
<div class="abs" style="left:437px;top:728px;width:4px;height:40px;background:#38484f"></div>
<div class="abs" style="left:393px;top:766px;width:48px;height:2px;background:#76b9ed"></div>
<svg class="abs" style="left:406px;top:737px" width="22" height="22" viewBox="0 0 24 24"><rect x="0" y="0" width="24" height="24" rx="9" fill="#3f8cf4"/><rect x="4.5" y="7.8" width="10.5" height="8.4" rx="1.6" fill="#fff"/><path d="M15.8 10.6l3.7-2.6v8l-3.7-2.6z" fill="#fff"/></svg>
<!-- word -->
<svg class="abs" style="left:454px;top:736px" width="24" height="24" viewBox="0 0 24 24"><path d="M9 3h14v18H9z" fill="#fff"/><path d="M11 5.5h10M11 8h10M11 10.5h10M11 13h10M11 15.5h10M11 18h10" stroke="#2b579a" stroke-width="1"/><path d="M0 2.5L13 0v24L0 21.5z" fill="#2b579a"/><text x="6.5" y="15.8" font-family="Liberation Sans" font-size="9" font-weight="bold" text-anchor="middle" fill="#fff">W</text></svg>
<div class="abs" style="left:446px;top:766px;width:40px;height:2px;background:#76b9ed"></div>
<!-- tray -->
<svg class="abs" style="left:1116px;top:743px" width="14" height="9" viewBox="0 0 14 9"><path d="M1 8L7 2l6 6" fill="none" stroke="#fff" stroke-width="1.3"/></svg>
<svg class="abs" style="left:1138px;top:743px" width="18" height="11" viewBox="0 0 18 11"><path d="M4 10.5C1.8 10.5.5 9.3.5 7.6c0-1.6 1.3-2.8 3-2.8C4.3 2.200 6.500 .5 9 .5c2.300 0 4.300 1.500 4.800 3.700 2 .2 3.700 1.500 3.700 3.300 0 1.900-1.500 3-3.500 3z" fill="#1e8fe0"/><path d="M4 10.5C1.8 10.5.5 9.3.5 7.6c0-1.600 1.300-2.800 3-2.800 1 0 2 .5 2.600 1.300L12 10.5z" fill="#0f6cc9"/></svg>
<svg class="abs" style="left:1162px;top:741px" width="18" height="15" viewBox="0 0 18 15"><path d="M4.5 1.5h13v9h-13zM11 10.5v3M7.5 14h7" fill="none" stroke="#fff" stroke-width="1.1"/><path d="M.5 .5h4v4h-4zM2.5 4.5V14" fill="none" stroke="#fff" stroke-width="1"/></svg>
<svg class="abs" style="left:1186px;top:741px" width="18" height="14" viewBox="0 0 18 14"><path d="M.5 4.5h3l4-3.5v12l-4-3.5h-3z" fill="none" stroke="#fff" stroke-width="1"/><path d="M10 5c.8.8.8 3.2 0 4M12.5 3.2c1.6 1.8 1.6 5.8 0 7.6M15 1.5c2.500 3 2.500 8 0 11" fill="none" stroke="#fff" stroke-width="1"/></svg>
<div class="abs" style="left:1215px;top:738.5px;font-size:12px;color:#fff;white-space:nowrap;letter-spacing:-.5px">ไทย</div>
<div class="abs" style="left:1246px;top:731.5px;width:58px;text-align:center;font-size:12px;line-height:17.5px;color:#fff;white-space:nowrap">14:30<br>26/10/2564</div>
<svg class="abs" style="left:1318px;top:739px" width="18" height="16" viewBox="0 0 18 16"><path d="M.5.5h16v11H6l-3 3.500v-3.500H.5z" fill="#fff"/><path d="M3.5 3.5h10M3.5 6h10M3.5 8.5h7" stroke="#1b2946" stroke-width="1"/></svg>
<div class="abs" style="left:1324px;top:746px;width:19px;height:19px;border-radius:50%;background:#2d2d2d;border:1.5px solid #6a6a6a;color:#fff;font-size:12px;line-height:16px;text-align:center">2</div>
<div class="abs" style="left:1355px;top:728px;width:1px;height:40px;background:#8c96a8"></div>
</body></html>
